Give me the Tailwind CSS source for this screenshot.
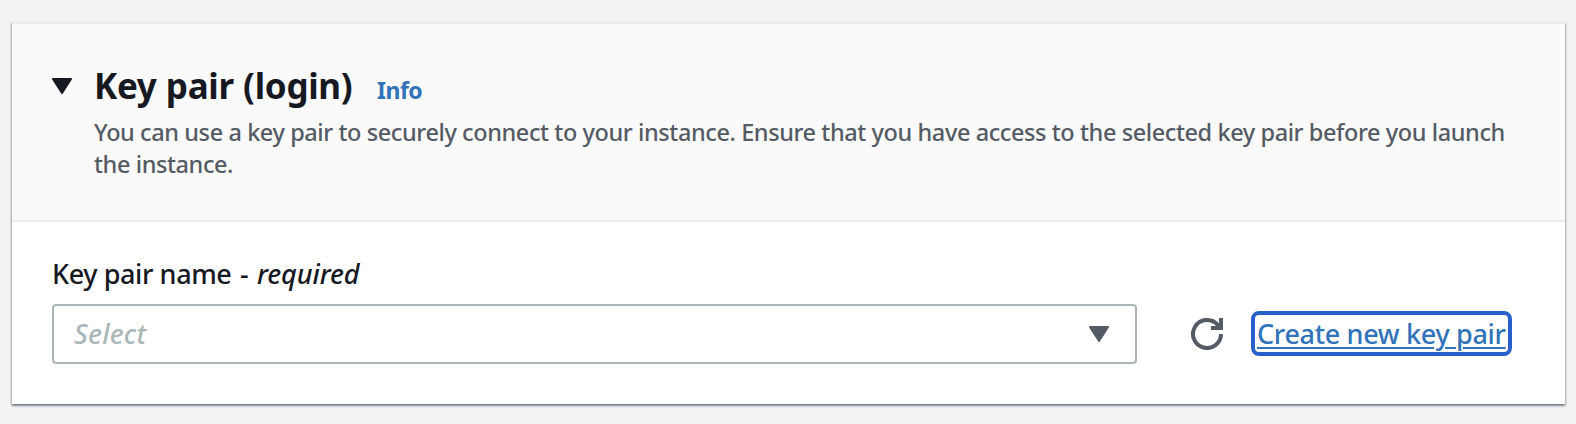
<!DOCTYPE html>
<html lang="en">
<head>
<meta charset="utf-8">
<title>Key pair (login)</title>
<script src="https://cdn.jsdelivr.net/npm/@tailwindcss/browser@4"></script>
</head>
<body class="h-[424px] overflow-hidden bg-[#f2f3f3] pt-[22px] pr-[11px] pl-3 font-['Noto_Sans','Open_Sans',sans-serif] text-[#16191f]">
<section class="flex h-[382px] flex-col border-t-2 border-[#eaeded] bg-white shadow-[0_2px_2px_0_rgba(0,18,36,0.36),1px_1px_2px_0_rgba(0,18,36,0.2),-1px_1px_2px_0_rgba(0,18,36,0.2)]">
  <header class="flex h-[198px] shrink-0 border-b-2 border-[#eaeded] bg-[#fafafa] pt-10 pl-10">
    <svg class="mt-[14px] h-4 w-5 shrink-0" viewBox="0 0 20 16" fill="#16191f" stroke="#16191f" stroke-width="2" stroke-linejoin="round"><path d="M1 1H19L10 15Z"/></svg>
    <div class="ml-[22px] whitespace-nowrap">
      <div class="flex h-[52px] items-baseline leading-[44px]">
        <h2 class="w-[283px] text-[35px] font-bold tracking-[-0.3px] [word-spacing:0.5px]">Key pair (login)</h2>
        <a class="text-[23px] font-bold tracking-[-0.5px] text-[#3173b9]">Info</a>
      </div>
      <p class="text-[23.5px] leading-8 font-medium tracking-[-0.41px] text-[#545b64]">You can use a key pair to securely connect to your instance. Ensure that you have access to the selected key pair before you launch<br>the instance.</p>
    </div>
  </header>
  <div class="pt-8 pl-10 whitespace-nowrap">
    <div class="h-[50px] text-[27px] leading-10 font-medium tracking-[-0.4px]"><span>Key pair name <span class="mr-0.5 ml-0.5">-</span> </span><em class="tracking-[-0.1px]">required</em></div>
    <div class="flex items-center">
      <div class="flex h-[60px] w-[1085px] items-center justify-between rounded-[4px] border-2 border-[#aab7b8] pr-[26px] pl-5">
        <span class="text-[27px] font-medium tracking-[0.2px] text-[#aab7b8] italic">Select</span>
        <svg class="h-4 w-5" viewBox="0 0 20 16" fill="#545b64" stroke="#545b64" stroke-width="2" stroke-linejoin="round"><path d="M1 1H19L10 15Z"/></svg>
      </div>
      <svg class="ml-[54px] size-8" viewBox="0 0 32 32" fill="none" stroke="#545b64" stroke-width="4"><path d="M30 16A14 14 0 1 1 26 6.2L29 10"/><path d="M20 10H30V0"/></svg>
      <a class="-mt-px ml-7 flex h-[45px] w-[261px] items-center rounded-lg border-4 border-[#2860cb] pt-0.5 pl-0.5 text-[27px] font-medium tracking-[-0.32px] text-[#3173b9] underline decoration-2 underline-offset-[3px]">Create new key pair</a>
    </div>
  </div>
</section>
</body>
</html>
